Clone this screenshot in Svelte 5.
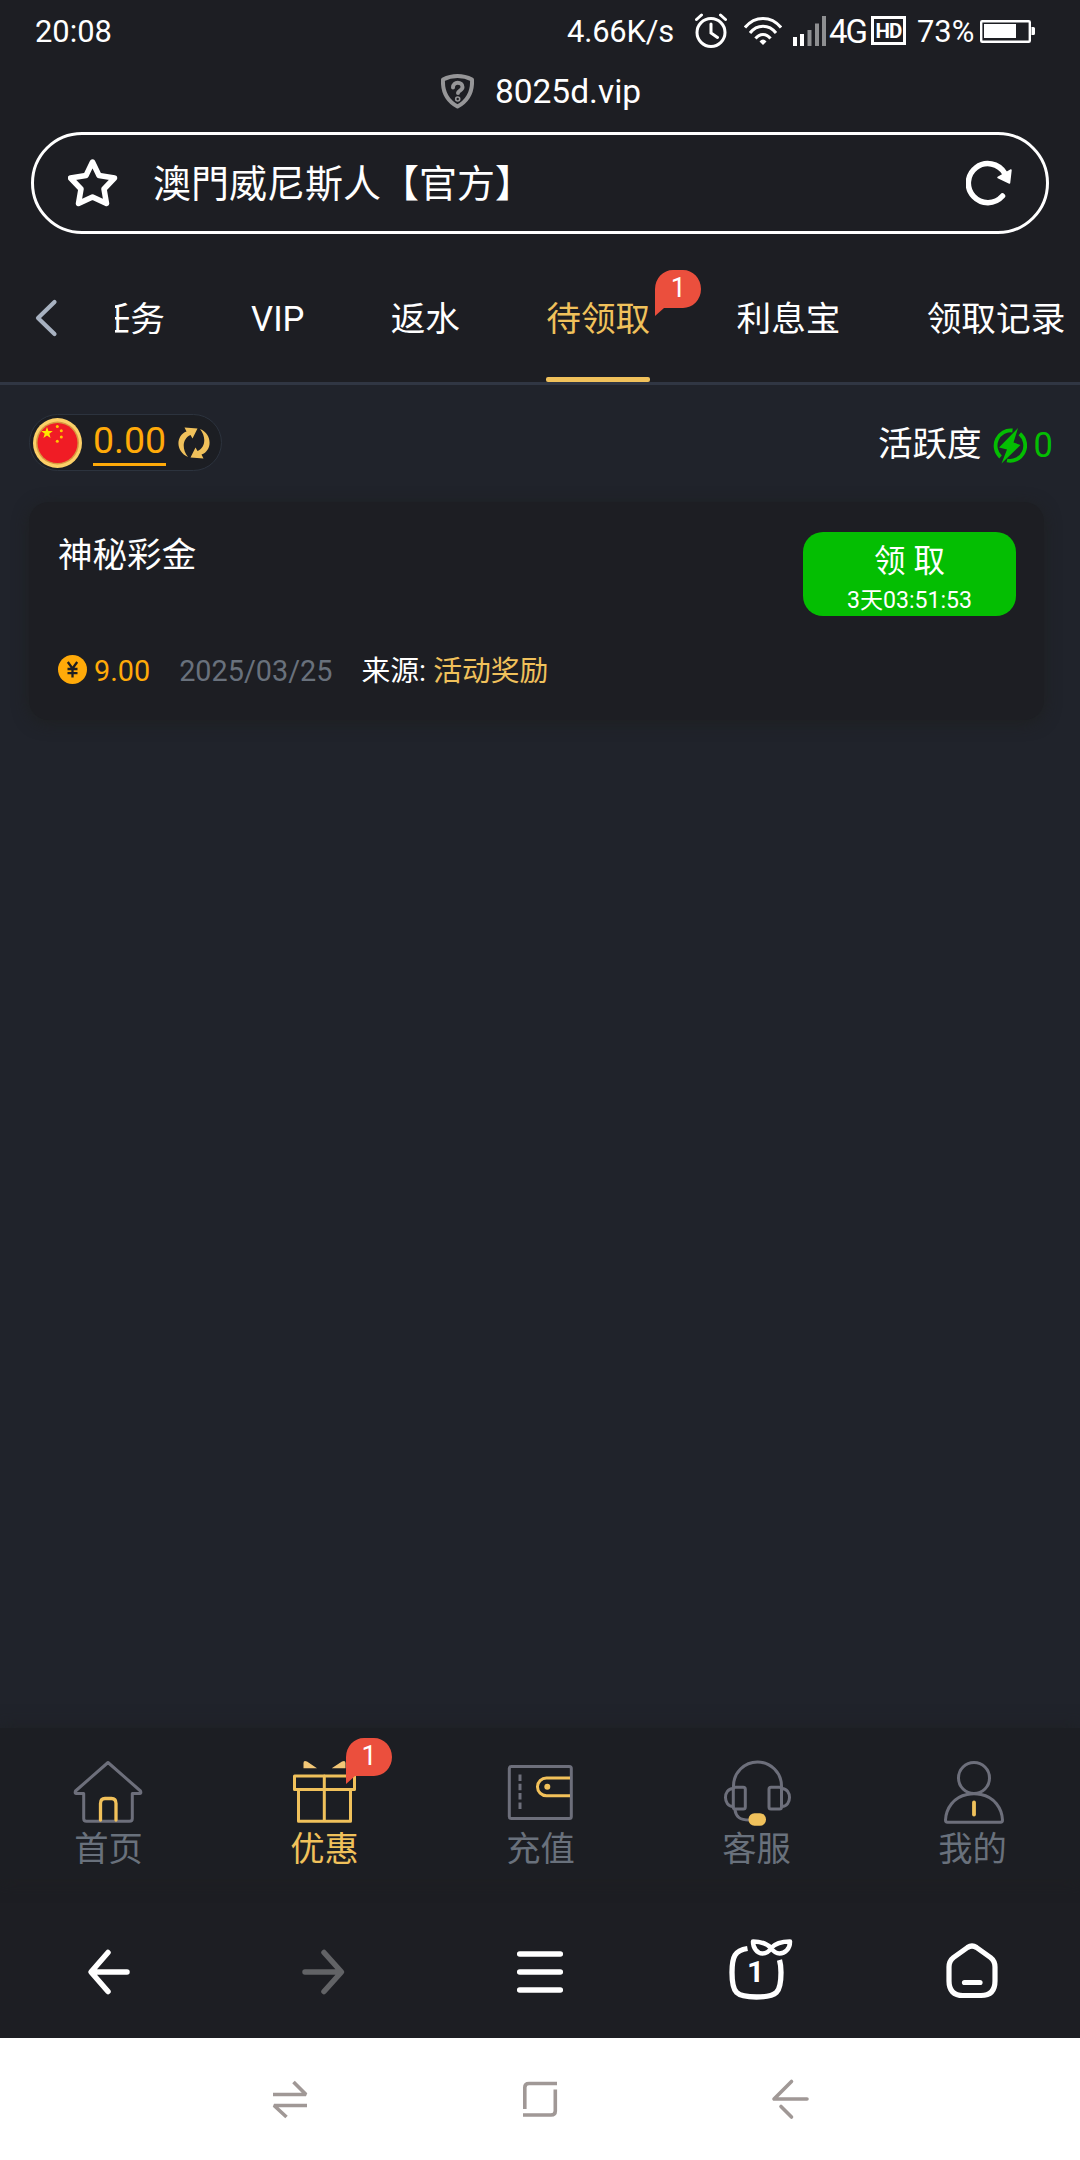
<script lang="ts">
  const tabs = [
    { label: '任务' },
    { label: 'VIP' },
    { label: '返水' },
    { label: '待领取', badge: 1 },
    { label: '利息宝' },
    { label: '领取记录' },
  ];
  const activeTab = '待领取';

  const navItems = [
    { id: 'home', label: '首页' },
    { id: 'gift', label: '优惠', badge: 1 },
    { id: 'wallet', label: '充值' },
    { id: 'service', label: '客服' },
    { id: 'mine', label: '我的' },
  ];
  const activeNav = 'gift';

  const rewards = [
    { title: '神秘彩金', amount: '9.00', date: '2025/03/25', source: '活动奖励', countdown: '3天03:51:53' },
  ];
</script>

{#snippet badge(count: number)}
  <span class="badge">
    <svg class="badge-shape" width="46" height="46" viewBox="0 0 46 46">
      <path d="M0 46V19A18 19 0 0 1 18 0H28A18 19 0 0 1 28 38H9Z" fill="#eb4f3d" />
    </svg>
    <span class="badge-count">{count}</span>
  </span>
{/snippet}

<div class="screen">
  <div class="status-bar">
    <span class="time">20:08</span>
    <span class="speed">4.66K/s</span>
    <svg class="alarm" width="34" height="36" viewBox="0 0 34 36" fill="none" stroke="#fff" stroke-width="3" stroke-linecap="round">
      <circle cx="17" cy="19.5" r="14" />
      <path d="M17 11v9l6.5 4.5M2.5 6.5l5-4.5M31.5 6.5l-5-4.5" />
    </svg>
    <svg class="wifi" width="38" height="30" viewBox="0 0 38 30" fill="none" stroke="#fff" stroke-width="3">
      <path d="M1 11.5C11-.5 27-.5 37 11.5M6 17C13 8 25 8 32 17M11.5 22.5C15.500 17 22.500 17 26.500 22.5" />
      <path d="M19 29l-3.500-3.500Q19 21.500 22.500 25.500Z" fill="#fff" stroke="none" />
    </svg>
    <svg class="signal" width="33" height="30" viewBox="0 0 33 30" fill="#fff">
      <path d="M0 21h4v9H0zM7 18h4v12H7z" />
      <path d="M14.500 14h4v16h-4zM22 7.500h4V30h-4zM29 0h4v30h-4z" opacity=".5" />
    </svg>
    <span class="network">4G</span>
    <span class="hd">HD</span>
    <span class="percent">73%</span>
    <svg class="battery" width="56" height="23" viewBox="0 0 56 23" fill="#fff">
      <rect x="1.200" y="1.200" width="48.600" height="20.600" rx="1" fill="none" stroke="#fff" stroke-width="2.400" />
      <path d="M4 4h32v14H4zM51.500 7h2q1.500 0 1.500 1.500v5q0 1.500-1.500 1.500h-2z" />
    </svg>
  </div>

  <div class="url-row">
    <svg width="33" height="35" viewBox="0 0 33 35" fill="none" stroke="#969698" stroke-width="4" stroke-linejoin="round" stroke-linecap="round">
      <path d="M16.500 2Q24 2 31 5.500Q32 24 16.500 32.500Q1 24 2 5.500Q9 2 16.500 2Z" />
      <path d="M12 13.500c0-6.500 9.500-6 9.500-.5 0 3.500-4.500 3.500-4.500 6" />
      <circle cx="16.700" cy="25" r=".8" />
    </svg>
    <span>8025d.vip</span>
  </div>

  <div class="address-bar">
    <svg width="50" height="50" viewBox="0 0 50 50" fill="none" stroke="#fff" stroke-width="5.500" stroke-linejoin="round">
      <path d="M24.500 4L31 17.500L46.500 20L36 31L38.500 45.500L24.500 39L10.500 45.500L13 31L2.500 20L18 17.500Z" />
    </svg>
    <span class="page-title">澳門威尼斯人【官方】</span>
    <svg width="48" height="48" viewBox="0 0 48 48" fill="none" stroke="#fff" stroke-width="5.500" stroke-linecap="round">
      <path d="M36.500 37A19.500 19.500 0 1 1 38.500 14" />
      <path d="M32 18.500L45 11L43.500 24Z" fill="#fff" stroke-width="1.500" stroke-linejoin="round" />
    </svg>
  </div>

  <div class="tab-bar">
    <svg class="tab-back" width="24" height="38" viewBox="0 0 24 38" fill="none" stroke="#a8b2c1" stroke-width="4.200" stroke-linecap="round" stroke-linejoin="round">
      <path d="M20.500 3L4 19L20.500 35" />
    </svg>
    <div class="tabs">
      {#each tabs as tab}
        <div class="tab" class:active={tab.label === activeTab}>
          {tab.label}
          {#if tab.badge}
            {@render badge(tab.badge)}
          {/if}
        </div>
      {/each}
    </div>
  </div>

  <main class="content">
    <div class="account-row">
      <div class="balance">
        <svg class="flag" width="49" height="50" viewBox="0 0 49 50">
          <ellipse cx="24.500" cy="25" rx="24.500" ry="25" fill="#fcd068" />
          <circle cx="24.500" cy="25" r="21.500" fill="#d89a40" />
          <circle cx="24.500" cy="25" r="20" fill="#f01c25" />
          <path d="M14 9l1.400 4h4.400l-3.500 2.700 1.300 4.300-3.600-2.600-3.600 2.600 1.300-4.300L8.200 13h4.400z" fill="#ffe600" />
          <g fill="#ffc800">
            <circle cx="24.300" cy="8.500" r="1.500" />
            <circle cx="28.300" cy="12.800" r="1.500" />
            <circle cx="28.300" cy="19" r="1.500" />
            <circle cx="24.300" cy="23.300" r="1.500" />
          </g>
        </svg>
        <span class="balance-value">0.00</span>
        <svg class="refresh" width="32" height="32" viewBox="0 0 32 32" fill="#f0c15b">
          <path d="M6.500 0.500L19.500 1.500L14.500 11.500L12.500 8C4.500 11.500 3.500 22 10 30C-2.500 25-2.500 8.500 8.500 4.500Z" />
          <path d="M25.500 31.500L12.500 30.500L17.500 20.500L19.500 24C27.500 20.500 28.500 10 22 2C34.500 7 34.500 23.500 23.500 27.500Z" />
        </svg>
      </div>
      <div class="activity">
        <span>活跃度</span>
        <svg width="34" height="36" viewBox="0 0 34 36" fill="none" stroke="#04be02" stroke-width="3.800">
          <path d="M7.500 29A15 15.300 0 0 1 19.500 2.500M26.800 5.800A15 15.300 0 0 1 14 32.500" />
          <path d="M25 0L6 19.500L14 21.500L8.500 35.500L27.500 17L20.500 14.500Z" fill="#04be02" stroke="none" />
        </svg>
        <span class="activity-value">0</span>
      </div>
    </div>

    {#each rewards as reward}
      <section class="reward-card">
        <div class="reward-head">
          <span class="reward-title">{reward.title}</span>
          <button class="claim" type="button">
            <span class="claim-label">领 取</span>
            <span class="claim-time">{reward.countdown}</span>
          </button>
        </div>
        <div class="reward-meta">
          <svg class="coin" width="29" height="29" viewBox="0 0 29 29">
            <circle cx="14.500" cy="14.500" r="14.500" fill="#ffaa09" />
            <path d="M9.800 7l4.700 6.500L19.200 7M14.500 13v9.500M9.500 14h10M9.500 18.200h10" fill="none" stroke="#1d1e23" stroke-width="2.300" />
          </svg>
          <span class="amount">{reward.amount}</span>
          <span class="date">{reward.date}</span>
          <span class="source">来源: <em>{reward.source}</em></span>
        </div>
      </section>
    {/each}
  </main>

  <nav class="bottom-nav">
    {#each navItems as item}
      <div class="nav-item" class:active={item.id === activeNav}>
        <svg width="72" height="72" viewBox="0 0 72 72" fill="none" stroke="#6d6f7b" stroke-width="3" stroke-linejoin="round" stroke-linecap="round">
          {#if item.id === 'home'}
            <path d="M36 5.500L68.500 34Q69.500 36.500 67.500 36.500H60.300V61.500Q60.300 64.300 57.500 64.300H14.500Q11.700 64.300 11.700 61.500V36.500H4.500Q2.500 36.500 3.500 34Z" />
            <path d="M28.500 63V46.500Q28.500 41.500 33 41.500H39.500Q44 41.500 44 46.500V63" stroke="#f2c15a" stroke-width="3.300" />
          {:else if item.id === 'gift'}
            <g stroke="#f0c15b">
              <rect x="6.500" y="19" width="60" height="13.500" />
              <path d="M10.500 33V64.300H62.500V33M36.300 19V64" />
            </g>
            <path d="M15.500 11.300V6Q15.500 3 19 4.500L29 11.300ZM57.500 11.300V6Q57.500 3 54 4.500L43.700 11.300Z" fill="#f2c777" stroke="none" />
          {:else if item.id === 'wallet'}
            <rect x="5.300" y="9.500" width="62" height="52" rx="2" />
            <path d="M16 17.500V53" stroke-dasharray="6.500 2.800" stroke-linecap="butt" />
            <path d="M66 21H42.500A9 8.800 0 0 0 42.500 38.700H66" stroke="#f2c15a" stroke-linecap="butt" />
            <circle cx="43.300" cy="29.800" r="3" fill="#f2c15a" stroke="none" />
          {:else if item.id === 'service'}
            <path d="M13.500 31V29A24 24 0 0 1 61.500 29V31" />
            <rect x="13.300" y="30.300" width="12" height="21.800" rx="2" />
            <rect x="49" y="30.300" width="12.500" height="21.800" rx="2" />
            <path d="M13 31.500C3 32 3 49 13 49.500M62 31.500C72 32 72 49 62 49.500M15 53C16 60 20 63 29 63" />
            <rect x="28.500" y="56.300" width="17.500" height="12.500" rx="6" fill="#f0c15b" stroke="none" />
          {:else}
            <ellipse cx="38" cy="21" rx="15.500" ry="15.500" />
            <path d="M31 37.500C18 40 10 51 9.500 63Q9.500 65.300 11.500 65.300H64.500Q66.500 65.300 66.500 63C66 51 58 40 45 37.500Q38 36 31 37.500Z" />
            <path d="M38 45.500V57.500" stroke="#f0c15b" stroke-width="3.800" />
          {/if}
        </svg>
        <span class="nav-label">{item.label}</span>
        {#if item.badge}
          {@render badge(item.badge)}
        {/if}
      </div>
    {/each}
  </nav>

  <div class="toolbar">
    <span class="tool">
      <svg width="66" height="66" viewBox="0 0 66 66" fill="none" stroke="#fff" stroke-width="5.500" stroke-linecap="round" stroke-linejoin="round">
        <path d="M33 13.500L16 33L33 52.500M17 33H52" />
      </svg>
    </span>
    <span class="tool">
      <svg width="66" height="66" viewBox="0 0 66 66" fill="none" stroke="#626366" stroke-width="5.500" stroke-linecap="round" stroke-linejoin="round">
        <path d="M33 13.500L50.500 33L33 52.500M49 33H14" />
      </svg>
    </span>
    <span class="tool">
      <svg width="66" height="66" viewBox="0 0 66 66" fill="none" stroke="#fff" stroke-width="5.500" stroke-linecap="round">
        <path d="M12.700 15H53.300M12.700 33H53.300M12.700 51H53.300" />
      </svg>
    </span>
    <span class="tool pages">
      <svg width="76" height="66" viewBox="0 0 76 66" fill="none" stroke="#fff" stroke-width="5.300" stroke-linejoin="round">
        <path d="M29.500 9.500C17 11.500 14 17 14 33.500C14 54 18 58 38.500 58C59 58 63 54 63 33.500Q63 26 61.500 21" />
        <path d="M35 2.500Q47 2.500 53 9Q59 2.500 72 2.500C72 10 67 14.500 61.500 14.500Q57 14.500 53 9Q50 14.500 44.500 14.500C39 14.500 35 9 35 2.500Z" stroke-width="4.500" />
      </svg>
      <span class="page-count">1</span>
    </span>
    <span class="tool">
      <svg width="66" height="66" viewBox="0 0 66 66" fill="none" stroke="#fff" stroke-width="5.200" stroke-linecap="round" stroke-linejoin="round">
        <path d="M28.500 8.500Q33 5.500 37.500 8.500L51.500 18.500Q56 22 56 28V42Q56 56.500 42 56.500H24Q10 56.500 10 42V28Q10 22 14.500 18.500Z" />
        <path d="M25.500 43.500H41" />
      </svg>
    </span>
  </div>

  <div class="system-nav">
    <svg width="40" height="40" viewBox="0 0 40 40" fill="none" stroke="#a09896" stroke-width="3.600">
      <path d="M3 15.500H36L23.500 3M37 26.500H4L16.500 38" stroke-linejoin="bevel" />
    </svg>
    <svg width="40" height="40" viewBox="0 0 40 40" fill="none" stroke="#a09896" stroke-width="3.600">
      <path d="M37 4.500H9Q4.800 4.500 4.800 8.500V30M3 36H31Q35.300 36 35.300 32V10.500" />
    </svg>
    <svg width="40" height="42" viewBox="0 0 40 42" fill="none" stroke="#a09896" stroke-width="3.600" stroke-linecap="round" stroke-linejoin="round">
      <path d="M21.500 3.500L4 21H37M11 28.500L21.500 39" />
    </svg>
  </div>
</div>

<style>
  :global(body) {
    background: #1d1e23;
  }

  .screen {
    width: 1080px;
    height: 2160px;
    display: flex;
    flex-direction: column;
    overflow: hidden;
    background: #1d1e23;
    color: #fff;
    font-family: Roboto, "Noto Sans CJK SC", sans-serif;
  }

  svg {
    display: block;
    flex-shrink: 0;
  }

  /* phone status bar */
  .status-bar {
    height: 62px;
    display: flex;
    align-items: center;
    padding: 1px 44px 0 35px;
    box-sizing: border-box;
    font-size: 30.9px;
    line-height: 62px;
    white-space: nowrap;
  }

  .time {
    flex: 1;
  }

  .speed {
    margin-right: 20px;
    letter-spacing: -0.2px;
  }

  .alarm {
    margin: 0 16px 2px 0;
  }

  .wifi {
    margin: 0 11px 2px 0;
  }

  .signal {
    margin: 0 3px 2px 0;
  }

  .network {
    width: 42px;
    font-size: 33px;
    letter-spacing: -2px;
  }

  .hd {
    width: 35px;
    height: 29px;
    box-sizing: border-box;
    margin: 0 11px 3px 0;
    border: 3px solid #fff;
    font-size: 20.5px;
    font-weight: 700;
    line-height: 24px;
    letter-spacing: -1px;
    text-align: center;
  }

  .percent {
    width: 55px;
    margin-right: 8px;
  }

  .battery {
    margin-bottom: 1px;
  }

  /* browser address area */
  .url-row {
    height: 70px;
    display: flex;
    justify-content: center;
    gap: 21px;
    padding: 12px 0 0 2px;
    box-sizing: border-box;
    font-size: 33.5px;
    line-height: 35px;
  }

  .address-bar {
    height: 102px;
    margin: 0 31px;
    padding: 0 32px 0 34px;
    box-sizing: border-box;
    display: flex;
    align-items: center;
    border: 3px solid #fff;
    border-radius: 51px;
  }

  .page-title {
    flex: 1;
    margin-left: 35px;
    padding-top: 2px;
    font-size: 38px;
    line-height: 50px;
  }

  /* category tabs */
  .tab-bar {
    height: 151px;
    display: flex;
    box-sizing: border-box;
    border-bottom: 3px solid #303643;
  }

  .tab-back {
    margin: 65px 57px 0 34px;
  }

  .tabs {
    flex: 1;
    min-width: 0;
    display: flex;
    gap: 86.3px;
    padding-top: 20px;
    overflow: hidden;
  }

  .tab {
    position: relative;
    flex-shrink: 0;
    height: 128px;
    box-sizing: border-box;
    font-size: 34.65px;
    line-height: 130px;
    white-space: nowrap;
  }

  /* the strip is scrolled a little to the left */
  .tab:first-child {
    margin-left: -19.5px;
  }

  .tab.active {
    color: #f0c15b;
  }

  .tab.active::after {
    content: "";
    position: absolute;
    left: 0;
    right: 0;
    bottom: 0;
    height: 5px;
    border-radius: 2px;
    background: #f0c15b;
  }

  .badge {
    position: absolute;
    width: 46px;
    height: 46px;
  }

  .badge-shape {
    position: absolute;
    inset: 0;
  }

  .badge-count {
    position: relative;
    display: block;
    font-size: 27px;
    line-height: 36px;
    text-align: center;
    color: #fff;
  }

  .tab .badge {
    left: 109px;
    top: 16px;
  }

  /* page content */
  .content {
    flex: 1;
    padding: 29px 27px 0 29px;
    background: #20232b;
  }

  .account-row {
    height: 88px;
    display: flex;
    justify-content: space-between;
    align-items: flex-start;
  }

  .balance {
    width: 193px;
    height: 57px;
    display: flex;
    align-items: center;
    padding-left: 3px;
    box-sizing: border-box;
    border: 1px solid #2c333e;
    border-radius: 29px;
    background: #1c1e23;
  }

  .balance-value {
    height: 40px;
    margin: 0 12px 0 11px;
    padding-bottom: 3px;
    border-bottom: 3px solid #ffaa09;
    font-size: 37.5px;
    line-height: 41px;
    color: #ffaa09;
  }

  .activity {
    display: flex;
    align-items: center;
    height: 60px;
    font-size: 34.56px;
    line-height: 60px;
  }

  .activity svg {
    margin: 4px 7px 0 11px;
  }

  .activity-value {
    padding-top: 1px;
    color: #04be02;
  }

  .reward-card {
    width: 1015px;
    height: 218px;
    padding: 30px 28px 0 29px;
    box-sizing: border-box;
    border-radius: 20px;
    background: #1d1e23;
    box-shadow: 0 3px 16px rgba(30, 31, 30, 0.8);
  }

  .reward-head {
    display: flex;
    justify-content: space-between;
    align-items: flex-start;
  }

  .reward-title {
    font-size: 34.56px;
    line-height: 46px;
  }

  .claim {
    width: 213px;
    height: 84px;
    display: flex;
    flex-direction: column;
    align-items: center;
    padding: 9px 0 0;
    border: none;
    border-radius: 20px;
    background: #04be02;
    color: #fff;
    font-family: inherit;
  }

  .claim-label {
    font-size: 31.5px;
    line-height: 42px;
  }

  .claim-time {
    font-size: 23.1px;
    line-height: 36px;
  }

  .reward-meta {
    display: flex;
    align-items: center;
    height: 44px;
    margin-top: 32px;
    font-size: 28.8px;
    line-height: 44px;
  }

  .coin {
    margin-bottom: 1px;
  }

  .reward-meta span {
    padding-top: 2px;
  }

  .amount {
    margin: 0 29px 0 7px;
    color: #ffaa09;
  }

  .date {
    margin-right: 29px;
    color: #69717c;
  }

  .source em {
    font-style: normal;
    color: #f0c15b;
  }

  /* site navigation */
  .bottom-nav {
    height: 151px;
    display: flex;
    background: #1c1e23;
    box-shadow: 0 0 16px rgba(30, 32, 34, 0.8);
  }

  .nav-item {
    position: relative;
    flex: 1;
    display: flex;
    flex-direction: column;
    align-items: center;
    padding-top: 29px;
  }

  .nav-label {
    padding-left: 1px;
    font-size: 34.3px;
    line-height: 40px;
    color: #69717c;
  }

  .nav-item.active .nav-label {
    color: #f0c15b;
  }

  .nav-item .badge {
    left: 130px;
    top: 10px;
  }

  /* browser toolbar */
  .toolbar {
    height: 159px;
    display: flex;
    padding-top: 60px;
    box-sizing: border-box;
  }

  .tool {
    flex: 1;
    display: flex;
    justify-content: center;
  }

  .pages {
    position: relative;
  }

  .page-count {
    position: absolute;
    left: 99px;
    top: 16px;
    font-size: 30px;
    font-weight: 700;
    line-height: 34px;
  }

  .system-nav {
    height: 122px;
    display: flex;
    justify-content: center;
    align-items: center;
    gap: 210px;
    background: #fff;
  }
</style>
